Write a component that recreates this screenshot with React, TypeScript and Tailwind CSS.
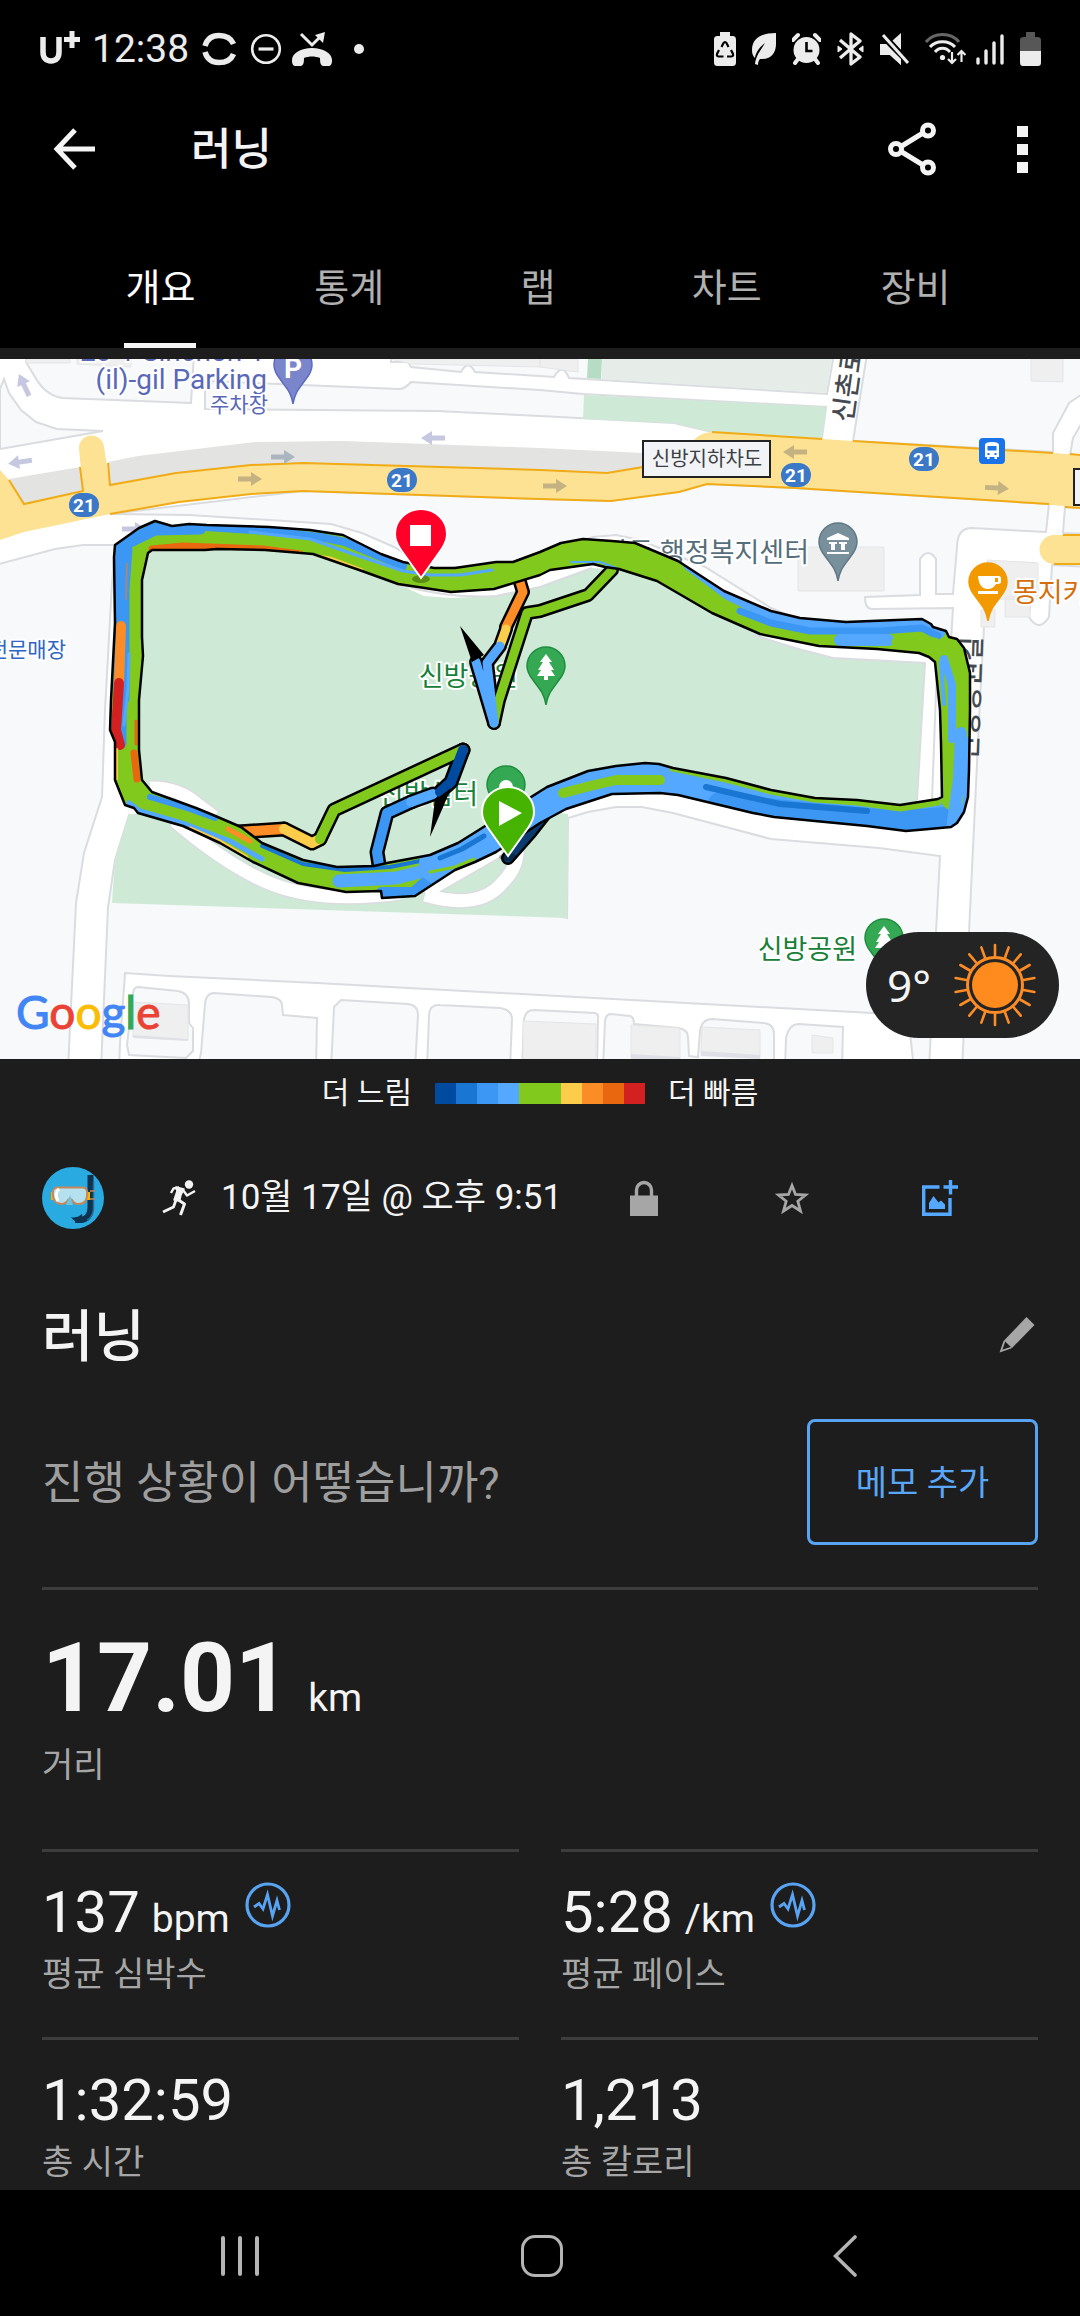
import React from 'react';

const FONT = "font-['Roboto','Noto_Sans_CJK_KR',sans-serif]";

/* ---------- status bar ---------- */

function StatusBar() {
  return (
    <div className="flex h-[98px] items-center justify-between pl-[40px] pr-[39px] text-[#ececec]">
      <div className="flex items-center">
        <svg className="h-[36px] w-[42px]" viewBox="0 0 42 36" fill="none" stroke="#ececec" aria-label="U+">
          <path d="M3 6v15c0 6 3 9 8 9s8-3 8-9V6" strokeWidth="5.5" />
          <path d="M32 0v17M24 8.500h16" strokeWidth="5" />
        </svg>
        <span className="ml-[10px] text-[39px] leading-[48px]">12:38</span>
        <svg className="ml-[13px] h-[34px] w-[34px]" viewBox="0 0 34 34" fill="none" stroke="#ececec" strokeWidth="5.500">
          <path d="M3 14C5 7 10 3.500 17 3.500S29 6 31.500 12M3 20c2 7 7 10.500 14 10.500S29 28 31.500 22" />
        </svg>
        <svg className="ml-[14px] h-[32px] w-[32px]" viewBox="0 0 32 32" fill="none" stroke="#ececec" strokeWidth="2.600">
          <circle cx="16" cy="16" r="13.800" />
          <path d="M8.500 16h15" strokeWidth="3.200" />
        </svg>
        <svg className="ml-[10px] h-[36px] w-[40px]" viewBox="0 0 40 36" fill="#ececec">
          <path d="M9 3l11 11 8-8" fill="none" stroke="#ececec" strokeWidth="3" />
          <path d="M23 4l10-3-2 11z" />
          <path d="M0 29c0-7 9-12 20-12s20 5 20 12c0 4-1 6-4 6h-4c-3 0-4-2-4-8-5-2-11-2-16 0 0 6-1 8-4 8H4c-3 0-4-2-4-6z" />
        </svg>
        <span className="ml-[22px] size-[10px] rounded-full bg-[#ececec]" />
      </div>
      <div className="flex items-center gap-[16px]">
        <svg className="h-[34px] w-[22px]" viewBox="0 0 22 34" fill="#ececec">
          <path d="M6 4V0h10v4h2c3 0 4 1 4 4v22c0 3-1 4-4 4H4c-3 0-4-1-4-4V8c0-3 1-4 4-4z" />
          <path d="M7.500 15l2-4c.8-1.300 2.200-1.300 3 0l2 4M17 18l2 4c.5 1.500-.3 2.500-2 2.500h-4M9.500 24.500H5c-1.700 0-2.500-1-2-2.500l2-4" fill="none" stroke="#000" strokeWidth="2.200" />
        </svg>
        <svg className="h-[34px] w-[24px]" viewBox="0 0 24 34" fill="#ececec">
          <path d="M24 1C10 1 0 6 0 18c0 4 1 6 3 8 1-6 4-10 10-15-4 7-9 12-10 21l3 1c0-3 1-5 2-6C20 28 24 20 24 12z" />
        </svg>
        <svg className="h-[34px] w-[29px]" viewBox="0 0 29 34" fill="#ececec">
          <circle cx="14.500" cy="18" r="13" />
          <path d="M1 8l5-5M28 8l-5-5M6 27l-3 4M23 27l3 4" stroke="#ececec" strokeWidth="4" strokeLinecap="round" />
          <path d="M14.500 10v9h6" fill="none" stroke="#000" strokeWidth="2.600" />
        </svg>
        <svg className="h-[34px] w-[27px]" viewBox="0 0 27 34" fill="none" stroke="#ececec" strokeWidth="3.300" strokeLinejoin="round">
          <path d="M3 8l20 17-9 7V2l9 7L3 26" />
          <path d="M1 14l4 3-4 3zM26 14l-4 3 4 3z" fill="#ececec" strokeWidth="1" />
        </svg>
        <svg className="h-[34px] w-[29px]" viewBox="0 0 29 34" fill="#ececec">
          <path d="M12 9l9-8v17zM2 12h4l15 15v6L10 23H2c-1.500 0-2-1-2-2v-7c0-1 .5-2 2-2z" />
          <path d="M1 1l27 30" stroke="#000" strokeWidth="7" />
          <path d="M0 12h6l15 15v6L10 23H0z" />
          <path d="M3 3l25 28" stroke="#ececec" strokeWidth="3" />
        </svg>
        <svg className="-mr-[6px] h-[34px] w-[41px]" viewBox="0 0 41 34" fill="none" stroke="#ececec" strokeWidth="3">
          <path d="M1 10C9 0 26 0 34 10" stroke="#666" />
          <path d="M5 15c6-7 19-7 25 0M10 20c4-5 11-5 15 0" />
          <circle cx="17.500" cy="25.500" r="2.600" fill="#ececec" stroke="none" />
          <path d="M27 20v11m-4-4l4 4 4-4M36.500 30V19m-4 4l4-4 4 4" strokeWidth="2.200" />
        </svg>
        <svg className="h-[34px] w-[28px]" viewBox="0 0 28 34" stroke="#ececec" strokeWidth="3.400" strokeLinecap="round">
          <path d="M2 27v4M10 19v12M18 11v20M26 4v27" />
        </svg>
        <svg className="h-[34px] w-[21px]" viewBox="0 0 21 34">
          <path d="M6 5V0h9v5h2c3 0 4 1 4 3v11H0V8c0-2 1-3 4-3z" fill="#575757" />
          <path d="M0 19h21v11c0 3-1 4-3 4H3c-2 0-3-1-3-4z" fill="#ececec" />
        </svg>
      </div>
    </div>
  );
}

/* ---------- app header ---------- */

const TABS = ['개요', '통계', '랩', '차트', '장비'];

function Header() {
  return (
    <header className="bg-black">
      <StatusBar />
      <div className="flex h-[102px] items-center pl-[53px] pr-[52px]">
        <button aria-label="뒤로">
          <svg className="block h-[42px] w-[42px]" viewBox="0 0 42 42" fill="none" stroke="#f4f4f4" strokeWidth="5">
            <path d="M22 2L4 21l18 19M4 21h38" />
          </svg>
        </button>
        <h1 className="ml-[96px] flex-1 pt-[2px] text-[44px] font-medium leading-[60px] text-[#f4f4f4]">러닝</h1>
        <button aria-label="공유">
          <svg className="block h-[54px] w-[48px]" viewBox="0 0 48 54" fill="none" stroke="#f4f4f4" strokeWidth="5">
            <circle cx="8" cy="27" r="5.500" />
            <circle cx="40" cy="8.500" r="5.500" />
            <circle cx="40" cy="45.500" r="5.500" />
            <path d="M13 24.500L35 11M13 29.500L35 43" />
          </svg>
        </button>
        <button aria-label="더보기" className="ml-[81px] flex flex-col gap-[7px]">
          <span className="size-[11px] bg-[#f4f4f4]" />
          <span className="size-[11px] bg-[#f4f4f4]" />
          <span className="size-[11px] bg-[#f4f4f4]" />
        </button>
      </div>
      <nav className="grid grid-cols-5 pl-[66px] pr-[70px]">
        {TABS.map((tab, i) => (
          <button key={tab} className={i === 0 ? 'flex h-[148px] flex-col items-center justify-end text-white' : 'flex h-[148px] flex-col items-center justify-end text-[#b0b0b0]'}>
            <span className="mb-[35px] text-[38px] leading-[40px]">{tab}</span>
            <span className={i === 0 ? 'h-[5px] w-[72px] bg-[#f4f4f4]' : 'h-[5px] w-[72px]'} />
          </button>
        ))}
      </nav>
    </header>
  );
}

/* ---------- map ---------- */

const BLOCKS = [
  'M0 30L4 20L9 34L21 51L36 63L57 70L103 72L0 90z',
  'M26 -5L26 3L35 18Q45 36 62 39L191 44L194 -5z',
  'M205 22L399 30Q405 30 411 23L540 31L583 35L826 48L822 79L712 73L674 64L540 57L437 52L205 50z',
  'M391 3L408 3L411 8L461 13Q468 0 475 13L554 18Q562 3 569 19L827 35L834 -5L391 -5z',
  'M867 -5L853 82L1053 93L1053 74L1069 44L1090 30L1090 -5z',
  'M1070 96L1073 79L1090 50L1090 97z',
  'M110 155L189 156L331 165L362 174L394 188L430 210L510 205L560 188L593 178L616 176L640 181L705 208L771 249L802 262L951 282L953 249L872 250Q865 250 865 238L920 236L920 200Q928 188 936 200L936 235L953 235L957 188Q957 169 972 169L1046 173L1049 145L795 129L707 125L611 142L540 140L303 132z',
  'M988 203L1034 204L1029 258Q1039 274 1049 258L1052 206L1090 208L1090 710L962 710L969 573L980 341L984 268z',
  'M-5 206L55 190L83 186L115 186L112 224L105 351L102 438L84 494L76 544L68 710L-5 710z',
  'M1065 148L1063 174L1090 175L1090 149z',
  'M129 456L115 501L108 548L101 710L119 710L120 684L125 614L169 617L317 624L540 636L872 654L908 656L914 710L929 710L936 573L940 497L879 489L771 480L673 454L642 448L616 448L588 453L568 459L567 559z',
  'M133 634Q134 628 138 628L178 632Q189 634 189 645L189 664L193 669L193 692L186 699L129 696L127 686z',
  'M205 645Q206 634 214 634L272 638Q282 640 282 646L283 656L317 659L316 710L197 710L201 694z',
  'M334 648L341 641L408 645Q418 646 418 656L415 710L331 710z',
  'M429 656Q430 645 440 646L500 649Q512 651 512 660L510 710L427 710z',
  'M524 661Q525 651 534 651L595 654Q599 655 598 660L597 710L522 710z',
  'M605 662Q606 655 611 655L630 657Q634 658 634 665L679 669Q688 671 688 678L689 697L698 698L700 672Q702 660 712 660L764 664Q774 665 774 675L774 710L603 710z',
  'M786 679Q789 665 799 665L843 668L842 710L785 710z',
];

const BUILDINGS = [
  'M26 0H70V4H26zM77 0H131V8L77 5z',
  'M540 0H578V13L540 8zM391 0H540V8L411 5z',
  'M1031 0H1063V23L1031 22z',
  'M798 188H884V232H798z',
  'M987 201L1038 204V240H987zM1005 238H1030V258H1005zM981 251H995V268H981z',
  'M133 643L188 646V681L133 678z',
  'M523 662L596 665V700H523z',
  'M631 666L680 669V700H631zM702 668L760 671V698L701 694z',
  'M812 676L833 679V694H812z',
];

const OUTER =
  'M115 186L139 169L155 162L172 167L189 165L207 166L269 168L310 171L343 176L381 195L403 203L434 209L455 209L496 203L513 203L540 193L561 184L583 180L612 182L635 184L678 202L724 232L771 252L800 259L846 263L922 260L931 265L933 268L946 272L949 278L957 280L964 289L970 314L970 351L969 411L968 438L964 453L957 464L951 468L929 470L906 472L867 467L815 462L774 458L753 454L678 436L660 434L612 435L566 450L540 464L496 493L475 503L455 511L415 537L382 539L381 532L346 533L298 524L253 503L220 484L183 467L138 454L134 449L125 446L115 421L115 383L110 371L111 341L115 264L114 198z';
const INNER =
  'M148 194L152 191L205 191L217 190L265 191L313 195L362 212L398 225L451 233L494 230L540 216L550 211L593 205L605 208L619 210L657 222L712 254L760 275L819 287L877 290L919 294L929 298L935 303L940 351L941 384L942 438L938 440L900 446L857 441L815 439L771 431L726 419L673 409L659 405L645 404L616 407L588 412L547 428L482 469L458 484L430 496L387 504L374 507L337 508L303 501L262 484L241 468L213 456L196 449L152 433L142 421L139 391L139 341L143 297L142 278L142 221z';

const C = {
  navy: '#004a9f',
  mid: '#1976d2',
  blue: '#3b97f3',
  sky: '#54a8ff',
  green: '#82c91e',
  yellow: '#fbcd4b',
  orange: '#fb8c26',
  rust: '#e8670f',
  red: '#d32121',
};

type Strand = { d: string; c: string; w: number };

const STRANDS: Strand[] = [
  { d: 'M120 384V250L122 186L155 170L200 169', c: C.blue, w: 13 },
  { d: 'M128 190L125 230V340', c: C.blue, w: 9 },
  { d: 'M190 167L270 172L320 178L345 183L403 207', c: C.blue, w: 8 },
  { d: 'M250 173L310 180L350 194L403 212L430 216L460 216L492 211', c: C.sky, w: 3 },
  { d: 'M152 190L183 187L262 190L300 195', c: C.rust, w: 7 },
  { d: 'M300 194L330 199L362 211', c: C.yellow, w: 3 },
  { d: 'M127 205L126 240', c: '#a1887f', w: 2 },
  { d: 'M121 267L119 326', c: C.orange, w: 10 },
  { d: 'M119 324L116 371L120 386', c: C.red, w: 10 },
  { d: 'M129 295L128 330L124 366', c: C.sky, w: 3 },
  { d: 'M136 362L136 385', c: C.rust, w: 3 },
  { d: 'M134 394L137 420', c: C.rust, w: 7 },
  { d: 'M117 390V420', c: C.yellow, w: 2 },
  { d: 'M150 438L190 450L215 459', c: C.blue, w: 6 },
  { d: 'M129 444L140 452L185 465L230 482L262 500', c: C.sky, w: 5 },
  { d: 'M190 469L220 482L247 498', c: C.yellow, w: 3 },
  { d: 'M228 470L250 482', c: C.orange, w: 5 },
  { d: 'M262 487L303 505L345 511L390 508L430 500L470 484', c: C.mid, w: 4 },
  { d: 'M382 535H414L430 521', c: C.blue, w: 14 },
  { d: 'M339 522L396 519L440 508L475 492L540 455', c: C.sky, w: 13 },
  { d: 'M440 505L480 489L500 477L545 448L612 421L660 421L771 447L867 455L906 460L950 455', c: C.sky, w: 42 },
  { d: 'M440 499L462 490L484 477', c: C.mid, w: 5 },
  { d: 'M430 513L455 508L474 500', c: C.green, w: 3 },
  { d: 'M720 445L774 452L867 461L906 463L945 460', c: C.blue, w: 24 },
  { d: 'M673 409L726 420L771 432L815 440L857 443L900 449L938 443', c: C.green, w: 7 },
  { d: 'M706 428L740 436L780 445L867 452', c: C.mid, w: 6 },
  { d: 'M563 434L590 427L616 421L660 421', c: C.green, w: 10 },
  { d: 'M955 470L962 430V385', c: C.sky, w: 18 },
  { d: 'M952 440V300', c: C.green, w: 22 },
  { d: 'M962 368V300L950 284', c: C.green, w: 12 },
  { d: 'M961 374L959 420L953 462', c: C.sky, w: 12 },
  { d: 'M944 300L952 326L952 380', c: C.sky, w: 8 },
  { d: 'M941 303L944 345', c: C.sky, w: 4 },
  { d: 'M571 203L600 203L643 219L670 232', c: C.sky, w: 2 },
  { d: 'M688 206L728 236L771 257L810 266L922 264L940 274', c: C.sky, w: 10 },
  { d: 'M740 252L771 264L810 272L880 272L922 269L938 277', c: C.blue, w: 7 },
  { d: 'M840 281H888', c: C.sky, w: 12 },
  { d: 'M896 283H935', c: C.green, w: 9 },
];

const SPURS: Strand[] = [
  { d: 'M494 364L499 341L527 254L540 252L588 236L612 211', c: C.green, w: 9 },
  { d: 'M520 223L523 233L506 268', c: C.orange, w: 9 },
  { d: 'M506 270L501 284', c: C.yellow, w: 9 },
  { d: 'M500 287L487 304L490 330L494 364L476 303', c: C.sky, w: 9 },
  { d: 'M238 473L284 470', c: C.orange, w: 10 },
  { d: 'M284 470L312 484L320 480', c: C.yellow, w: 10 },
  { d: 'M320 480L334 451L463 391', c: C.green, w: 10 },
  { d: 'M380 512L377 493L387 454L411 443', c: C.blue, w: 10 },
  { d: 'M411 443L433 435', c: C.sky, w: 10 },
  { d: 'M440 433L451 423L463 391', c: C.navy, w: 10 },
  { d: 'M508 499L530 474L545 455', c: '#0b3a6e', w: 9 },
];

function PoiPin({ x, y, fill, stroke, children }: { x: number; y: number; fill: string; stroke: string; children?: React.ReactNode }) {
  return (
    <g transform={`translate(${x} ${y})`}>
      <path d="M0 39C-2 27 -6 24 -13 14C-17 9 -19 5 -19 0A19 19 0 0 1 19 0C19 5 17 9 13 14C6 24 2 27 0 39z" fill={fill} stroke={stroke} strokeWidth="1.500" />
      {children}
    </g>
  );
}

function RoutePin({ x, y, fill, children }: { x: number; y: number; fill: string; children: React.ReactNode }) {
  return (
    <g transform={`translate(${x} ${y})`}>
      <ellipse cx="0" cy="45" rx="9" ry="4" fill="#000" opacity=".3" />
      <path d="M0 44L-20 16C-25 9 -26 5 -26 0A26 25 0 0 1 26 0C26 5 25 9 20 16z" fill={fill} stroke="#fff" strokeWidth="2" />
      {children}
    </g>
  );
}

function Arrow({ x, y, r = 0, c }: { x: number; y: number; r?: number; c: string }) {
  return <path transform={`translate(${x} ${y}) rotate(${r})`} d="M-12 -2.500H1V-7L12 0L1 7V2.500H-12z" fill={c} />;
}

function Label({ x, y, c, size = 27, anchor = 'end', children }: { x: number; y: number; c: string; size?: number; anchor?: 'start' | 'middle' | 'end'; children: React.ReactNode }) {
  return (
    <text x={x} y={y} fill={c} fontSize={size} textAnchor={anchor} stroke="#fff" strokeWidth="4" strokeLinejoin="round" paintOrder="stroke">
      {children}
    </text>
  );
}

const TREE = 'M0 -12L6 -4H3L8 4H5L9 10H2V14H-2V10H-9L-5 4H-8L-3 -4H-6z';

function RouteMap() {
  const shields = [
    [84, 146],
    [402, 121],
    [796, 116],
    [924, 100],
  ];
  return (
    <svg className="block w-full" viewBox="0 0 1080 700" role="img" aria-label="러닝 경로 지도">
      <defs>
        <clipPath id="track">
          <path d={OUTER + INNER} clipRule="evenodd" />
        </clipPath>
      </defs>
      <rect width="1080" height="700" fill="#fff" />
      {BLOCKS.map((d) => (
        <path key={d} d={d} fill="#f8f9fb" stroke="#dadce0" strokeWidth="2" />
      ))}
      <path d="M602 0H832L826 34L602 20z" fill="#e6ece8" />
      <path d="M588 0H602L601 20L587 19z" fill="#b7dcc5" />
      <path d="M584 36L826 48L822 79L712 73L674 64L583 60z" fill="#ceead6" />
      {BUILDINGS.map((d) => (
        <path key={d} d={d} fill="#efefef" stroke="#e4e5e7" strokeWidth="1" />
      ))}
      <path d="M133 676L188 680V682L133 679zM701 692L760 696V700L701 697zM631 695L680 698V700H631z" fill="#dfe0e6" />

      {/* park */}
      <path d="M129 456L115 501L112 544L567 559L568 455L300 420z" fill="#ceead6" />
      <path d="M130 180L300 180L424 237L451 239L496 237L540 228L592 209L640 212L753 274L795 289L833 299L925 304L917 443L880 455L640 415L540 440L440 505L300 510L150 440L130 420z" fill="#ceead6" />
      <path d="M400 226Q450 240 496 237L540 228L592 209M753 276L795 289L833 299L925 304L917 441M937 306L932 441" fill="none" stroke="#dadce0" strokeWidth="2" />
      <path d="M150 429Q178 428 198 446L214 458M175 462Q225 505 269 524Q320 545 400 534M425 536Q480 552 503 523Q518 508 517 490M425 533L500 490" fill="none" stroke="#dadce0" strokeWidth="16" />
      <path d="M150 429Q178 428 198 446L214 458M175 462Q225 505 269 524Q320 545 400 534M425 536Q480 552 503 523Q518 508 517 490M425 533L500 490" fill="none" stroke="#fff" strokeWidth="13" />

      {/* highway */}
      <path d="M108 103L138 97L255 83L344 82L540 89L643 94L643 108L607 114L303 104L110 126zM9 120L80 108L83 132L24 145z" fill="#e3e3e1" />
      <path d="M0 111L9 121L24 145L83 132L79 90A12.500 12.500 0 0 1 104 88L110 126L176 114L251 106L303 104L540 111L607 114L643 108L690 98Q688 75 712 73L822 80L853 82L1053 94L1080 96V148L795 129L707 125L679 133L611 142L540 140L303 132L251 135L179 143L110 155L24 173L0 181zM1080 176H1054A14 14 0 0 0 1054 205H1080z" fill="#fde293" />
      <path d="M9 121L24 145L83 132L80 108M108 104L110 126L176 114L251 106L303 104L540 111L607 114L643 108M712 73L822 80M853 82L1053 94M1070 95L1080 96M1080 149L1065 148M1049 145L795 129L707 125L679 133L611 142L540 140L303 132L251 135L179 143L110 155M1063 176H1080M1054 205H1080" fill="none" stroke="#f0ab16" strokeWidth="2" />

      <Arrow x={24} y={26} r={-115} c="#c5c8e0" />
      <Arrow x={20} y={103} r={172} c="#c5c8e0" />
      <Arrow x={433} y={79} r={180} c="#c5c8e0" />
      <Arrow x={134} y={170} c="#c5c8e0" />
      <Arrow x={283} y={98} c="#aab5c0" />
      <Arrow x={250} y={120} c="#c4b283" />
      <Arrow x={555} y={127} c="#c4b283" />
      <Arrow x={795} y={93} r={180} c="#c4b283" />
      <Arrow x={997} y={129} r={3} c="#c4b283" />

      {/* labels */}
      <Label x={265} y={2} c="#5a68b8" size={28}>20-1 Sinchon 1</Label>
      <Label x={267} y={30} c="#5a68b8" size={28}>(il)-gil Parking</Label>
      <Label x={268} y={53} c="#5a68b8" size={21}>주차장</Label>
      <Label x={66} y={298} c="#2f66c4" size={21}>전문매장</Label>
      <Label x={809} y={203} c="#546e7a">신방동 행정복지센터</Label>
      <Label x={1013} y={243} c="#d56e0c" anchor="start">몽지카페</Label>
      <Label x={518} y={327} c="#188038">신방공원</Label>
      <Label x={478} y={445} c="#188038">신방쉼터</Label>
      <Label x={857} y={600} c="#188038">신방공원</Label>
      <text transform="translate(852 64) rotate(-82)" fontSize="27" fontWeight="500" fill="#444a50">신촌로</text>
      <text transform="translate(977 402) rotate(-88)" fontSize="27" fontWeight="500" fill="#444a50">신방공원길</text>

      {shields.map(([x, y]) => (
        <g key={x}>
          <rect x={x - 15} y={y - 12} width="30" height="24" rx="12" fill="#3b78c8" />
          <text x={x} y={y + 7} fontSize="19" fontWeight="700" fill="#fff" textAnchor="middle">21</text>
        </g>
      ))}
      <g>
        <rect x="643" y="82" width="127" height="36" fill="#f1f3f6" stroke="#222" strokeWidth="2" />
        <text x="707" y="107" fontSize="20" fill="#3c4043" textAnchor="middle">신방지하차도</text>
        <rect x="1074" y="110" width="20" height="36" fill="#f1f3f6" stroke="#222" strokeWidth="2" />
      </g>
      <g transform="translate(979 79)">
        <rect width="26" height="26" rx="4" fill="#1a73e8" />
        <path d="M6 7Q6 4 13 4T20 7V19H18V21H15.500V19H10.500V21H8V19H6z" fill="#fff" />
        <path d="M8.500 8h9v4.500h-9zM8.500 15h2v2h-2zM15.500 15h2v2h-2z" fill="#1a73e8" />
      </g>

      <PoiPin x={293} y={6} fill="#7b85cb" stroke="#5c6bc0">
        <text x="0" y="13" fontSize="28" fontWeight="700" fill="#fff" textAnchor="middle">P</text>
      </PoiPin>
      <PoiPin x={838} y={183} fill="#78909c" stroke="#5f7884">
        <path d="M-11 -4L0 -9L11 -4V-2H-11zM-9 0H-1V2H-3V8H-7V2H-9zM1 0H9V2H7V8H3V2H1zM-11 10H11V12H-11z" fill="#fff" />
      </PoiPin>
      <PoiPin x={988} y={223} fill="#f29900" stroke="#f29900">
        <path d="M-10 -6H11Q13 -6 13 -3V0Q13 2 8 2Q5 7 0 7Q-9 7 -10 -6zM7 -4V0H10V-4zM-10 9H10V12H-10z" fill="#fff" fillRule="evenodd" />
      </PoiPin>
      <PoiPin x={546} y={307} fill="#34a853" stroke="#1e8e3e">
        <path d={TREE} fill="#fff" />
      </PoiPin>
      <PoiPin x={506} y={426} fill="#34a853" stroke="#1e8e3e">
        <circle cy="2" r="7" fill="#fff" />
      </PoiPin>
      <PoiPin x={884} y={579} fill="#34a853" stroke="#1e8e3e">
        <path d={TREE} fill="#fff" />
      </PoiPin>

      {/* recorded track */}
      <g fill="none" strokeLinejoin="round" strokeLinecap="round">
        {SPURS.map((s) => (
          <path key={s.d} d={s.d} stroke="#000" strokeWidth={s.w + 5} />
        ))}
        {SPURS.map((s) => (
          <path key={s.d} d={s.d} stroke={s.c} strokeWidth={s.w} />
        ))}
      </g>
      <path d="M460 267L484 296L472 303zM451 429L444 446L430 478L435 441z" fill="#000" />
      <path d={OUTER + INNER} fill={C.green} fillRule="evenodd" />
      <g clipPath="url(#track)" fill="none" strokeLinejoin="round" strokeLinecap="round">
        {STRANDS.map((s) => (
          <path key={s.d} d={s.d} stroke={s.c} strokeWidth={s.w} />
        ))}
      </g>
      <path d={OUTER + INNER} fill="none" stroke="#000" strokeWidth="2.500" strokeLinejoin="round" />

      <RoutePin x={421} y={175} fill="#ff0029">
        <rect x="-11" y="-9" width="21" height="21" fill="#fff" />
      </RoutePin>
      <RoutePin x={508} y={453} fill="#46b300">
        <path d="M-9 -11L14 1L-9 14z" fill="#fff" />
      </RoutePin>

      <text x="16" y="670" fontSize="46" fontFamily="Lato, sans-serif" strokeWidth="1">
        <tspan fill="#4285f4" stroke="#4285f4">G</tspan>
        <tspan fill="#ea4335" stroke="#ea4335">o</tspan>
        <tspan fill="#fbbc05" stroke="#fbbc05">o</tspan>
        <tspan fill="#4285f4" stroke="#4285f4">g</tspan>
        <tspan fill="#34a853" stroke="#34a853">l</tspan>
        <tspan fill="#ea4335" stroke="#ea4335">e</tspan>
      </text>
    </svg>
  );
}

function Weather() {
  const rays = Array.from({ length: 18 }, (_, i) => i * 20);
  return (
    <div className="absolute bottom-[21px] right-[21px] flex h-[106px] w-[193px] items-center justify-between rounded-full bg-[#242424] pl-[21px] pr-[22px]">
      <span className="font-['Noto_Sans',sans-serif] text-[44px] leading-[48px] text-[#f4f4f4]">9°</span>
      <svg className="h-[84px] w-[84px]" viewBox="-42 -42 84 84">
        <circle r="23" fill="#ff8a1e" />
        <circle r="27.500" fill="none" stroke="#fb8c26" strokeWidth="3" />
        {rays.map((a) => (
          <path key={a} transform={`rotate(${a})`} d="M0 -29V-40" stroke="#fb8c26" strokeWidth="2.600" strokeLinecap="round" />
        ))}
      </svg>
    </div>
  );
}

/* ---------- legend ---------- */

function Legend() {
  return (
    <div className="flex h-[68px] items-center justify-center gap-[23px] text-[30px] leading-[40px] text-[#f4f4f4]">
      <span>더 느림</span>
      <div className="flex h-[21px]">
        <span className="w-[21px] bg-[#004a9f]" />
        <span className="w-[21px] bg-[#1976d2]" />
        <span className="w-[21px] bg-[#3b97f3]" />
        <span className="w-[21px] bg-[#54a8ff]" />
        <span className="w-[42px] bg-[#82c91e]" />
        <span className="w-[21px] bg-[#fbcd4b]" />
        <span className="w-[21px] bg-[#fb8c26]" />
        <span className="w-[21px] bg-[#e8670f]" />
        <span className="w-[21px] bg-[#d32121]" />
      </div>
      <span>더 빠름</span>
    </div>
  );
}

/* ---------- activity details ---------- */

function Avatar() {
  return (
    <svg className="h-[62px] w-[62px] shrink-0" viewBox="0 0 62 62">
      <circle cx="31" cy="31" r="31" fill="#29abe2" />
      <path d="M48.500 8V40Q48.500 52 39 53L33 53" fill="none" stroke="#0e3350" strokeWidth="6" />
      <path d="M51.500 14V42Q51 50 45 53" fill="none" stroke="#2d6a8e" strokeWidth="1.500" />
      <path d="M29 50Q34 52 40 47L41 55Q33 57 29 50z" fill="#0e3350" />
      <path d="M9 25H13V33H9zM44 25H48V33H44z" fill="#f7b500" />
      <path d="M48 24H53M48 32H53" stroke="#c8875a" strokeWidth="1.500" />
      <path d="M15 20.500H41Q46 21 45 28Q45 37 36 37Q32 37 30 33Q28 31 26 33Q24 37 19 37Q11 36 11 28Q10 21 15 20.500z" fill="#b5e1ee" stroke="#c8875a" strokeWidth="2" />
      <path d="M28 28L31 38H24z" fill="#6cc5e3" />
      <path d="M17 22Q12 26 16 34" fill="none" stroke="#fff" strokeWidth="3" />
    </svg>
  );
}

function MetaRow() {
  return (
    <div className="flex h-[142px] items-center pr-[24px]">
      <Avatar />
      <svg className="ml-[58px] h-[36px] w-[34px] shrink-0" viewBox="0 0 34 36" fill="none" stroke="#f4f4f4" strokeLinejoin="round">
        <circle cx="27" cy="4.500" r="4.200" fill="#f4f4f4" stroke="none" />
        <path d="M14 7L22 9L19 15L17.500 21L12 20L15 11z" fill="#f4f4f4" strokeWidth="1.500" />
        <path d="M17 7.500L11.500 8.500L9 13" strokeWidth="2.400" />
        <path d="M21 10L25 15.500L33 11" strokeWidth="2.400" />
        <path d="M15 19L22.500 24L18.500 35" strokeWidth="3" />
        <path d="M14 20L11.500 27L1 32" strokeWidth="2.800" />
      </svg>
      <span className="ml-[25px] shrink-0 whitespace-nowrap text-[35px] leading-[48px] text-[#f4f4f4]">10월 17일 @ 오후 9:51</span>
      <div className="ml-[8px] grid flex-1 grid-cols-3 justify-items-center">
        <button aria-label="비공개">
          <svg className="block h-[36px] w-[28px]" viewBox="0 0 28 36">
            <rect y="15.500" width="28" height="20.500" fill="#a6a6a6" />
            <path d="M6.500 17V10a7.500 7.500 0 0 1 15 0V17" fill="none" stroke="#a6a6a6" strokeWidth="3.400" />
          </svg>
        </button>
        <button aria-label="즐겨찾기">
          <svg className="block h-[36px] w-[34px]" viewBox="0 0 34 36" fill="none" stroke="#a6a6a6" strokeWidth="2.800">
            <path d="M17 5.500L20.500 14.500L30.500 15L22.800 21.200L25.500 31L17 25.500L8.500 31L11.200 21.200L3.500 15L13.500 14.500z" />
          </svg>
        </button>
        <button aria-label="사진 추가">
          <svg className="block h-[38px] w-[36px]" viewBox="0 0 36 38">
            <path d="M17.500 8H1.700V35.300H28V19" fill="none" stroke="#54a8ff" strokeWidth="3.400" />
            <path d="M28.500 1V15.500M21.500 8H36" stroke="#54a8ff" strokeWidth="3.400" />
            <path d="M7 30V24L11.500 17L16.500 23.500L19 21.500L23 25.500V30z" fill="#54a8ff" />
          </svg>
        </button>
      </div>
    </div>
  );
}

function PulseIcon() {
  return (
    <svg className="h-[46px] w-[46px]" viewBox="0 0 46 46" fill="none" stroke="#58a3f2">
      <circle cx="23" cy="23" r="21" strokeWidth="3.200" />
      <path d="M9 25L14 21.500L18 27L22.500 12.500L27.500 34L32 18.500L34.500 28" strokeWidth="2.800" />
    </svg>
  );
}

function Stat({ value, unit, label, pulse }: { value: string; unit?: string; label: string; pulse?: boolean }) {
  return (
    <div className="border-t-[3px] border-[#3d3d3d] pt-[30px]">
      <div className="flex h-[60px]">
        <div className="flex items-baseline gap-[12px] text-[#f4f4f4]">
          <span className="text-[58px] leading-[60px]">{value}</span>
          {unit && <span className="text-[39px] leading-[40px]">{unit}</span>}
        </div>
        {pulse && (
          <button aria-label="차트 보기" className="ml-[15px] h-[46px]">
            <PulseIcon />
          </button>
        )}
      </div>
      <p className="mt-[12px] text-[34px] leading-[40px] text-[#a6a6a6]">{label}</p>
    </div>
  );
}

export default function App() {
  return (
    <div className={`flex min-h-screen flex-col bg-[#1d1d1d] ${FONT}`}>
      <Header />
      <main className="flex-1">
        <section className="relative mt-[11px]">
          <RouteMap />
          <Weather />
        </section>
        <Legend />
        <div className="px-[42px]">
          <MetaRow />
          <div className="flex h-[132px] items-center justify-between">
            <h2 className="pt-[4px] text-[56px] font-medium leading-[64px] text-[#f4f4f4]">러닝</h2>
            <button aria-label="이름 편집" className="mr-[3px]">
              <svg className="block h-[36px] w-[36px]" viewBox="0 0 36 36">
                <path d="M27.500 0L35.500 8L13 31L5 23.500z" fill="#a6a6a6" />
                <path d="M5.500 24L2 34L12.500 30.500" fill="none" stroke="#a6a6a6" strokeWidth="1.800" />
              </svg>
            </button>
          </div>
          <div className="flex h-[162px] items-center justify-between">
            <p className="pt-[4px] text-[45px] leading-[56px] text-[#9e9e9e]">진행 상황이 어떻습니까?</p>
            <button className="h-[126px] w-[231px] rounded-[8px] border-[3px] border-[#58a3f2] pt-[2px] text-[34px] leading-[40px] text-[#5aa7f8]">메모 추가</button>
          </div>
          <div className="mt-[24px] border-t-[3px] border-[#3d3d3d] pb-[64px] pt-[38px]">
            <div className="flex items-baseline gap-[18px] text-[#f4f4f4]">
              <span className="text-[96px] font-bold leading-[100px]">17.01</span>
              <span className="text-[39px] leading-[40px]">km</span>
            </div>
            <p className="mt-[17px] text-[34px] leading-[40px] text-[#a6a6a6]">거리</p>
          </div>
          <div className="grid grid-cols-2 gap-x-[42px] gap-y-[43px] pb-[8px]">
            <Stat value="137" unit="bpm" label="평균 심박수" pulse />
            <Stat value="5:28" unit="/km" label="평균 페이스" pulse />
            <Stat value="1:32:59" label="총 시간" />
            <Stat value="1,213" label="총 칼로리" />
          </div>
        </div>
      </main>
      <footer className="grid h-[126px] grid-cols-3 place-items-center bg-black pl-[89px] pr-[84px] pt-[6px]">
        <button aria-label="최근 앱">
          <svg className="block h-[42px] w-[40px]" viewBox="0 0 40 42" stroke="#b4b4b4" strokeWidth="4" strokeLinecap="round">
            <path d="M3 3V39M20 3V39M37 3V39" />
          </svg>
        </button>
        <button aria-label="홈">
          <span className="block size-[42px] rounded-[14px] border-[3px] border-[#b4b4b4]" />
        </button>
        <button aria-label="이전">
          <svg className="block h-[42px] w-[24px]" viewBox="0 0 24 42" fill="none" stroke="#b4b4b4" strokeWidth="3.600" strokeLinecap="round">
            <path d="M22 2L2.500 21L22 40" />
          </svg>
        </button>
      </footer>
    </div>
  );
}
